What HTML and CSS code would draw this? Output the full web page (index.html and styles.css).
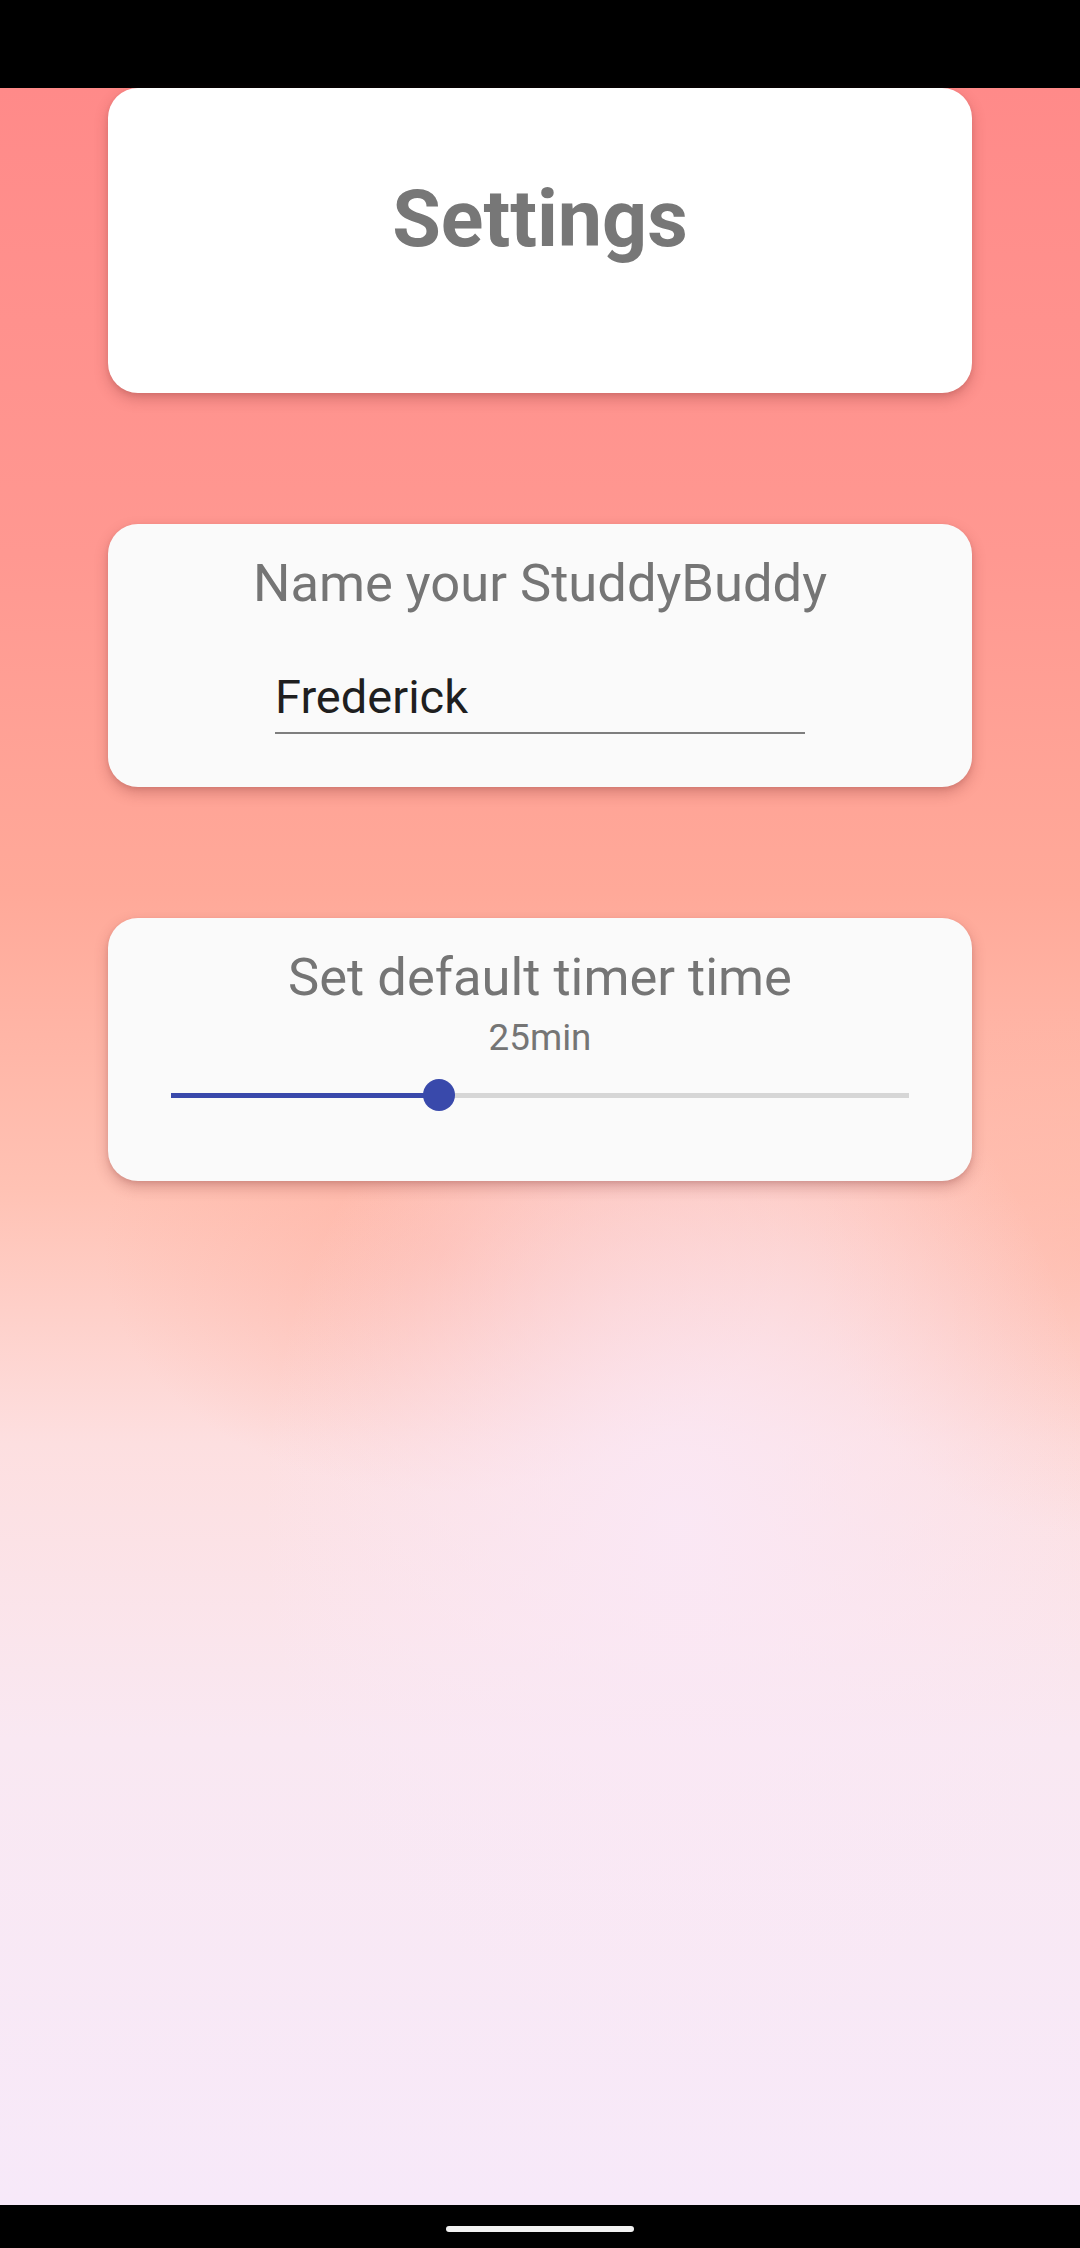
FILE: index.html
```html
<!DOCTYPE html>
<html lang="en">
<head>
<meta charset="utf-8">
<title>Settings</title>
<link rel="stylesheet" href="styles.css">
</head>
<body>
<div class="screen">
  <div class="status-bar"></div>
  <main class="content">
    <section class="card card-header">
      <h1 class="page-title">Settings</h1>
    </section>
    <section class="card card-setting">
      <h2 class="setting-title">Name your StuddyBuddy</h2>
      <input class="name-input" type="text" value="Frederick">
    </section>
    <section class="card card-setting">
      <h2 class="setting-title">Set default timer time</h2>
      <div class="timer-value">25min</div>
      <div class="slider">
        <div class="slider-track"></div>
        <div class="slider-active" style="width: 36.3%"></div>
        <div class="slider-thumb" style="left: 36.3%"></div>
      </div>
    </section>
  </main>
  <div class="nav-bar"><div class="home-pill"></div></div>
</div>
</body>
</html>
```
FILE: styles.css
```css
html, body {
  margin: 0;
  padding: 0;
}
body {
  font-family: Roboto, "Noto Sans", "Liberation Sans", sans-serif;
  background: #000;
}
.screen {
  width: 1080px;
  height: 2248px;
  display: flex;
  flex-direction: column;
  overflow: hidden;
}
.status-bar {
  height: 88px;
  flex: 0 0 88px;
  background: #000;
}
.content {
  flex: 1;
  display: flex;
  flex-direction: column;
  align-items: center;
  gap: 131px;
  background:
    radial-gradient(ellipse 420px 560px at 63% 68%, rgba(250, 232, 246, 0.9), rgba(250, 232, 246, 0) 100%),
    radial-gradient(ellipse 340px 240px at 41% 55%, rgba(255, 172, 156, 0.5), rgba(255, 172, 156, 0) 100%),
    radial-gradient(ellipse 260px 280px at 100% 55%, rgba(255, 178, 162, 0.45), rgba(255, 178, 162, 0) 100%),
    linear-gradient(180deg, #ff8a89 0%, #ff9891 22%, #ffa999 38%, #ffc2b4 52%, #fddfe0 64%, #f9e8f2 78%, #f7e9f9 100%);
}
.card {
  width: 864px;
  box-sizing: border-box;
  border-radius: 30px;
  box-shadow: 0 6px 14px rgba(120, 40, 40, 0.28), 0 2px 4px rgba(120, 40, 40, 0.12);
  display: flex;
  flex-direction: column;
  align-items: center;
}
.card-header {
  height: 305px;
  background: #ffffff;
  padding-top: 92px;
}
.page-title {
  margin: 0;
  font-size: 79px;
  line-height: 79px;
  font-weight: 700;
  color: #777777;
}
.card-setting {
  height: 263px;
  background: #fafafa;
  padding: 33px 63px 0;
}
.setting-title {
  margin: 0;
  font-size: 52.5px;
  line-height: 53px;
  font-weight: 400;
  color: #757575;
}
.name-input {
  margin-top: 63px;
  width: 530px;
  box-sizing: border-box;
  padding: 0 0 12px 0;
  border: none;
  border-bottom: 2px solid #7e7e7e;
  background: transparent;
  outline: none;
  font-family: Roboto, "Noto Sans", "Liberation Sans", sans-serif;
  font-size: 47px;
  line-height: 47px;
  height: 61px;
  color: #1f1f1f;
}
.timer-value {
  margin-top: 15px;
  font-size: 36.75px;
  line-height: 37px;
  color: #757575;
}
.slider {
  position: relative;
  margin-top: 23px;
  width: 738px;
  height: 32px;
}
.slider-track {
  position: absolute;
  left: 0;
  right: 0;
  top: 13.5px;
  height: 5px;
  background: #d6d6d6;
}
.slider-active {
  position: absolute;
  left: 0;
  top: 13.5px;
  height: 5px;
  background: #3949ab;
}
.slider-thumb {
  position: absolute;
  top: 0;
  width: 32px;
  height: 32px;
  margin-left: -16px;
  border-radius: 50%;
  background: #3949ab;
}
.nav-bar {
  height: 43px;
  flex: 0 0 43px;
  background: #000;
  display: flex;
  justify-content: center;
  padding-top: 21px;
  box-sizing: border-box;
}
.home-pill {
  width: 188px;
  height: 6px;
  border-radius: 3px;
  background: #f2f2f2;
}
```
